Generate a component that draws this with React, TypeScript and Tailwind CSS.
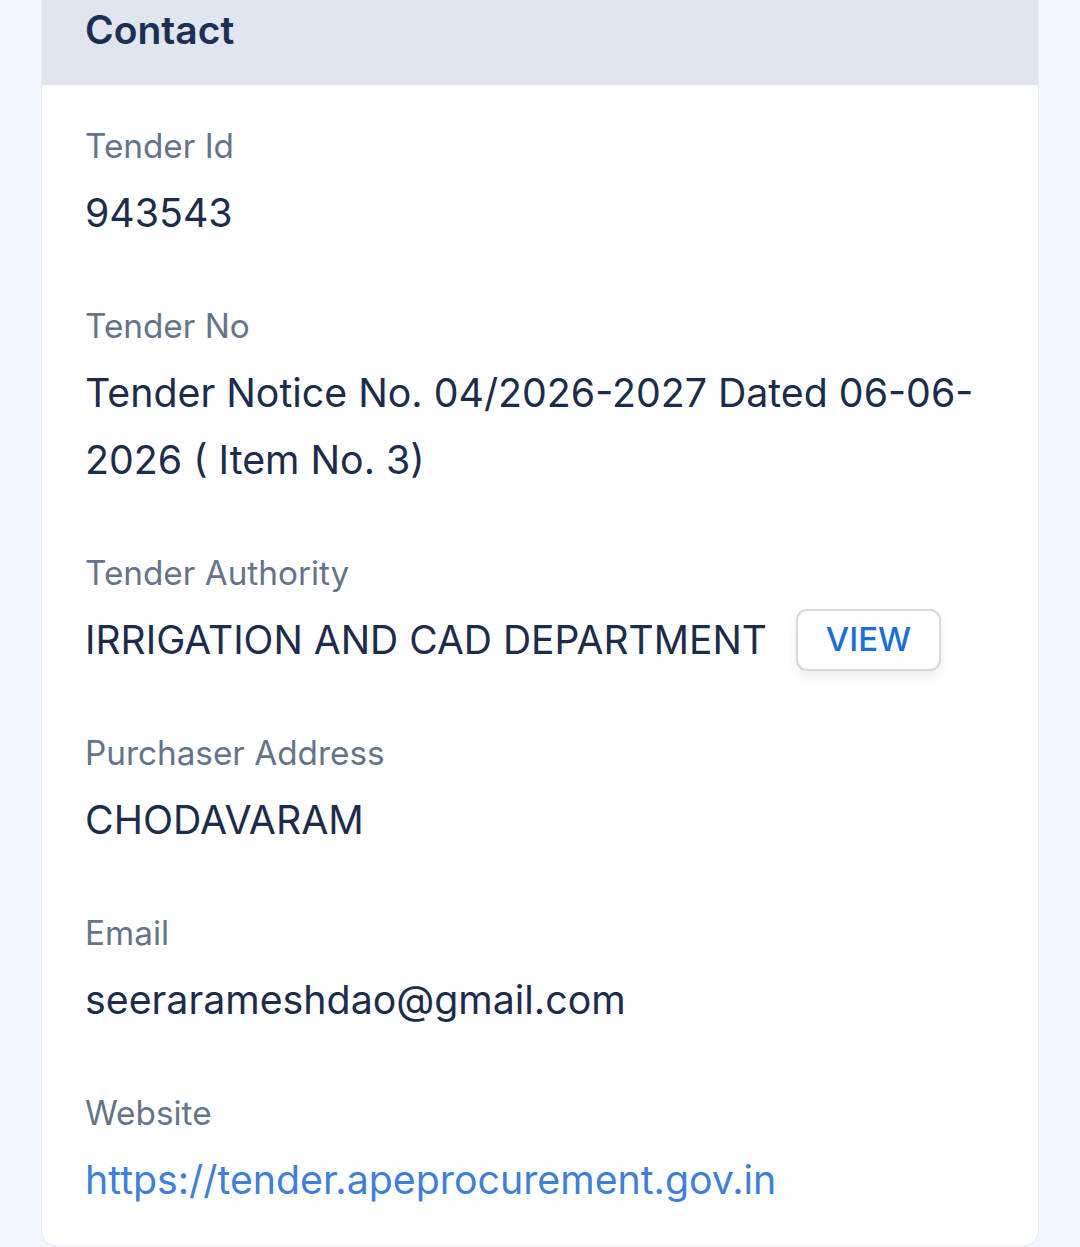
import React from "react";

const font = { fontFamily: "Inter, 'Noto Sans', sans-serif" };

function Field({ label, children }: { label: string; children: React.ReactNode }) {
  return (
    <div className="mb-[56px]">
      <div className="text-[33.3px] leading-[48px] text-[#64748b]">{label}</div>
      <div className="mt-[9px] text-[39.3px] leading-[67px] text-[#1c2c4c]">{children}</div>
    </div>
  );
}

export default function App() {
  return (
    <div className="min-h-[1247px] w-[1080px] bg-[#f1f5fd]" style={font}>
      <div className="ml-[42px] w-[996px] overflow-hidden rounded-b-[16px] bg-white shadow-[0_0_0_1px_rgba(226,232,240,0.6)]">
        <div className="h-[85px] bg-[#e0e5ee] pl-[43px]">
          <div className="text-[39px] font-semibold leading-[60px] text-[#1b2f57]">Contact</div>
        </div>
        <div className="pl-[43px] pr-[44px] pt-[37px] pb-[33px]">
          <Field label="Tender Id">943543</Field>
          <Field label="Tender No">Tender Notice No. 04/2026-2027 Dated 06-06-2026 ( Item No. 3)</Field>
          <div className="mb-[56px]">
            <div className="text-[33.3px] leading-[48px] text-[#64748b]">Tender Authority</div>
            <div className="mt-[9px] flex items-center gap-[29px]">
              <span className="text-[39px] leading-[67px] text-[#1c2c4c]">IRRIGATION AND CAD DEPARTMENT</span>
              <button className="flex h-[62px] w-[145px] items-center justify-center rounded-[11px] border-2 border-[#d6d9de] bg-white text-[33px] font-medium text-[#1b6fd8] shadow-[0_6px_12px_rgba(0,0,0,0.08)]">
                VIEW
              </button>
            </div>
          </div>
          <Field label="Purchaser Address">CHODAVARAM</Field>
          <Field label="Email">seerarameshdao@gmail.com</Field>
          <div>
            <div className="text-[33.3px] leading-[48px] text-[#64748b]">Website</div>
            <div className="mt-[9px] text-[39.3px] leading-[67px] text-[#3f7fd9]">https://tender.apeprocurement.gov.in</div>
          </div>
        </div>
      </div>
    </div>
  );
}
